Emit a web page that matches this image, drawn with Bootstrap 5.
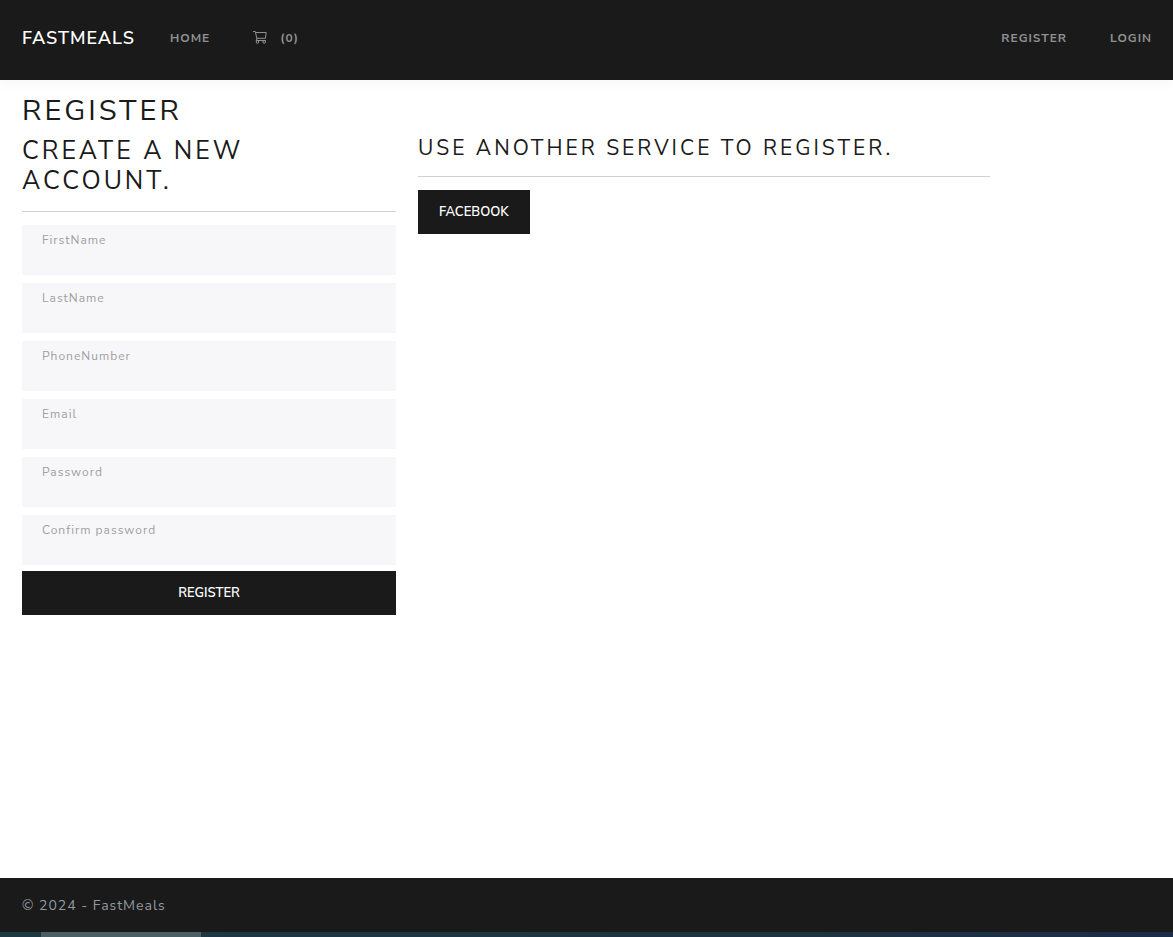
<!DOCTYPE html>
<html lang="en">
<head>
<meta charset="utf-8">
<meta name="viewport" content="width=device-width, initial-scale=1">
<title>Register - FastMeals</title>
<link rel="stylesheet" href="https://cdn.jsdelivr.net/npm/bootstrap@5.3.0/dist/css/bootstrap.min.css">
<script defer src="https://cdn.jsdelivr.net/npm/bootstrap@5.3.0/dist/js/bootstrap.bundle.min.js"></script>
<style>
  :root { --ink: #1a1a1a; --gutter: 22px; }
  body { font-family: "Nunito Sans", Nunito, Lato, sans-serif; font-size: 14px; line-height: 22px; color: var(--ink); background: #fff; }
  h1, h2, h3 { text-transform: uppercase; letter-spacing: 3px; font-weight: 400; margin: 0; color: var(--ink); }
  h1 { font-size: 29px; line-height: 34px; margin-bottom: 8px; }
  h2 { font-size: 25px; line-height: 30px; }
  h3 { font-size: 21px; line-height: 25px; }
  hr { margin: 15px 0 13px; opacity: 1; border-top: 1px solid #d1d1d1; }
  .site-bar { background: var(--ink); min-height: 80px; padding: 0 21px 5px 22px; box-shadow: 0 4px 12px rgba(0,0,0,.03); }
  .site-bar .navbar-brand { font-size: 18px; font-weight: 600; line-height: 26px; color: #fff; margin-right: 35px; padding: 0; letter-spacing: 1px; }
  .site-bar .nav-link { font-size: 12px; font-weight: 700; line-height: 20px; letter-spacing: 1px; color: #909090; padding: 0; text-transform: uppercase; }
  .menu-links { gap: 43px; }
  .cart-link { gap: 13px; }
  .page-grid { grid-template-columns: 374fr 572fr 161fr; column-gap: var(--gutter); padding-left: var(--gutter); }
  .intro { padding: 14px 0 0 var(--gutter); }
  .form-floating > .form-control { height: 50px; min-height: 50px; border: 0; border-radius: 0; background: #f7f7f9; font-size: 14px; padding: 20px 20px 4px; }
  .form-floating > label, .form-floating > .form-control:focus ~ label, .form-floating > .form-control:not(:placeholder-shown) ~ label {
    font-size: 12px; line-height: 18px; letter-spacing: 1px; height: auto; padding: 6px 20px; border: 0; color: #a0a0a2; transform: none; opacity: 1; }
  .form-floating > label::after { display: none; }
  .btn-ink { background: var(--ink); color: #fff; border: 0; border-radius: 0; font-size: 13px; line-height: 18px; font-weight: 600; padding: 13px 21px; text-transform: uppercase; }
  .btn-ink:hover { background: #333; color: #fff; }
  .submit-row { margin-top: 6px; }
  .site-foot { background: var(--ink); color: #919aa1; padding: 17px var(--gutter) 15px; letter-spacing: 1px; }
  .strip { height: 5px; background: linear-gradient(90deg, #1d3a43, #1d3443 70%, #1c2b47); padding-left: 41px; }
  .strip-item { width: 160px; background: #4c5f64; }
</style>
</head>
<body class="d-flex flex-column min-vh-100">
<header>
  <nav class="site-bar d-flex align-items-center" aria-label="Main">
    <a class="navbar-brand" href="#">FASTMEALS</a>
    <div class="menu-links d-flex flex-grow-1">
      <a class="nav-link" href="#">Home</a>
      <a class="cart-link nav-link d-flex align-items-center" href="#" aria-label="Cart (0)">
        <svg width="14" height="14" viewBox="0 0 14 14" fill="none" stroke="currentColor" aria-hidden="true"><path d="M0 .5h2.3L4 8.2M2.6 1.5h10.6l-.8 5.8H3.9M4 7.5l-.8 2h9.6"/><circle cx="4.5" cy="11" r="1.3"/><circle cx="11.2" cy="11" r="1.3"/></svg>
        <span>(0)</span>
      </a>
      <a class="nav-link ms-auto" href="#">Register</a>
      <a class="nav-link" href="#">Login</a>
    </div>
  </nav>
</header>
<main class="flex-grow-1">
  <div class="intro"><h1>Register</h1></div>
  <div class="page-grid d-grid">
    <form>
      <h2>Create a new account.</h2>
      <hr>
      <div class="d-flex flex-column gap-2">
        <div class="form-floating"><input class="form-control" id="first" type="text" placeholder=" "><label for="first">FirstName</label></div>
        <div class="form-floating"><input class="form-control" id="last" type="text" placeholder=" "><label for="last">LastName</label></div>
        <div class="form-floating"><input class="form-control" id="phone" type="tel" placeholder=" "><label for="phone">PhoneNumber</label></div>
        <div class="form-floating"><input class="form-control" id="email" type="email" placeholder=" "><label for="email">Email</label></div>
        <div class="form-floating"><input class="form-control" id="pass" type="password" placeholder=" "><label for="pass">Password</label></div>
        <div class="form-floating"><input class="form-control" id="confirm" type="password" placeholder=" "><label for="confirm">Confirm password</label></div>
      </div>
      <div class="submit-row"><button class="btn btn-ink w-100" type="submit">Register</button></div>
    </form>
    <section>
      <h3>Use another service to register.</h3>
      <hr>
      <button class="btn btn-ink" type="button">Facebook</button>
    </section>
  </div>
</main>
<footer class="site-foot">© 2024 - FastMeals</footer>
<div class="strip d-flex" aria-hidden="true"><div class="strip-item"></div></div>
</body>
</html>
